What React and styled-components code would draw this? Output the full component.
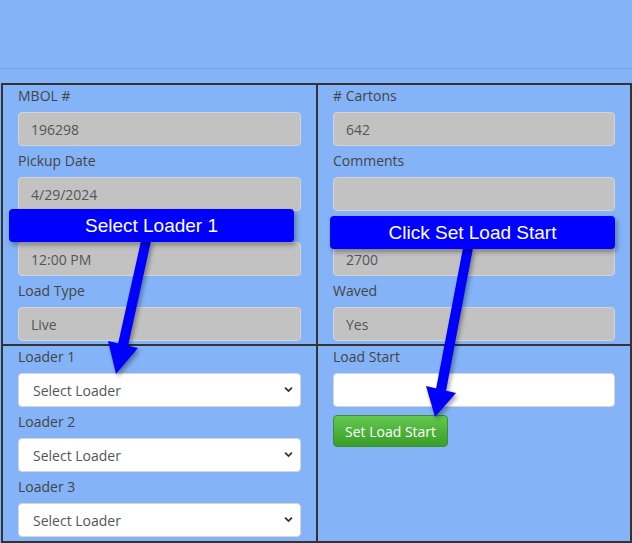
import React from "react";
import styled, { createGlobalStyle } from "styled-components";

const GlobalStyle = createGlobalStyle`
  html, body {
    margin: 0;
    padding: 0;
    background: #84b4f7;
    font-family: "Open Sans", "Noto Sans", Arial, sans-serif;
  }
  * { box-sizing: border-box; }
`;

const leftTop = [
  { label: "MBOL #", value: "196298" },
  { label: "Pickup Date", value: "4/29/2024" },
  { label: "Pickup Time", value: "12:00 PM" },
  { label: "Load Type", value: "Live" },
];

const rightTop = [
  { label: "# Cartons", value: "642" },
  { label: "Comments", value: "" },
  { label: "Weight", value: "2700" },
  { label: "Waved", value: "Yes" },
];

const loaders = ["Loader 1", "Loader 2", "Loader 3"];

export default function App() {
  return (
    <Page>
      <GlobalStyle />
      <Header />
      <Grid>
        <Cell>
          {leftTop.map((f) => (
            <Field key={f.label}>
              <Label>{f.label}</Label>
              <TextInput readOnly disabled value={f.value} />
            </Field>
          ))}
        </Cell>
        <Cell>
          {rightTop.map((f) => (
            <Field key={f.label}>
              <Label>{f.label}</Label>
              <TextInput readOnly disabled value={f.value} />
            </Field>
          ))}
        </Cell>
        <Cell bottom>
          {loaders.map((l) => (
            <Field key={l}>
              <Label>{l}</Label>
              <SelectWrap>
                <Select defaultValue="">
                  <option value="">Select Loader</option>
                </Select>
                <Chevron viewBox="0 0 10 7">
                  <path d="M1.2 1.4 L5 5.2 L8.8 1.4" />
                </Chevron>
              </SelectWrap>
            </Field>
          ))}
        </Cell>
        <Cell bottom>
          <Field>
            <Label>Load Start</Label>
            <TextInput white readOnly value="" />
          </Field>
          <GreenButton>Set Load Start</GreenButton>
        </Cell>
      </Grid>

      <Arrows viewBox="0 0 632 543">
        <g fill="#0000ff">
          <polygon points="141,241 151,241 128,346 118,344" />
          <polygon points="108,341 138,348 116,374" />
          <polygon points="463,248 473,248 446,391 436,389" />
          <polygon points="426,386 456,393 435,417" />
        </g>
      </Arrows>
      <Callout style={{ left: 9, top: 209 }}>Select Loader 1</Callout>
      <Callout style={{ left: 330, top: 216 }}>Click Set Load Start</Callout>
    </Page>
  );
}

const Page = styled.div`
  position: relative;
  width: 632px;
  height: 543px;
  overflow: hidden;
`;

const Header = styled.div`
  height: 69px;
  border-bottom: 1px solid #76a3e2;
  margin-bottom: 14px;
`;

const Grid = styled.div`
  margin-left: 1px;
  display: grid;
  grid-template-columns: 315px 314px;
  border-left: 2px solid #333;
  border-top: 2px solid #333;
`;

const Cell = styled.div`
  border-right: 2px solid #333;
  border-bottom: 2px solid #333;
  padding: 0 15px ${(p) => (p.bottom ? "4px" : "3px")} 15px;
  display: flex;
  flex-direction: column;
  gap: 4px;
`;

const Field = styled.div`
  display: flex;
  flex-direction: column;
`;

const Label = styled.label`
  font-size: 14px;
  line-height: 21px;
  color: #444;
  margin-bottom: 6px;
`;

const TextInput = styled.input`
  height: 34px;
  width: 100%;
  padding: 0 12px;
  border: 1px solid ${(p) => (p.white ? "#d6d6d6" : "#d4d4d4")};
  border-radius: 4px;
  background: ${(p) => (p.white ? "#fff" : "#c2c2c2")};
  color: #555;
  font-family: inherit;
  font-size: 14px;
  outline: none;
  &:disabled {
    opacity: 1;
    -webkit-text-fill-color: #555;
  }
`;

const SelectWrap = styled.div`
  position: relative;
`;

const Select = styled.select`
  appearance: none;
  -webkit-appearance: none;
  width: 100%;
  height: 34px;
  padding: 0 30px 0 14px;
  border: 1px solid #d6d6d6;
  border-radius: 4px;
  background: #fff;
  color: #555;
  font-family: inherit;
  font-size: 14px;
  outline: none;
`;

const Chevron = styled.svg`
  position: absolute;
  right: 8px;
  top: 13px;
  width: 9px;
  height: 7px;
  fill: none;
  stroke: #333;
  stroke-width: 2;
  pointer-events: none;
`;

const GreenButton = styled.button`
  align-self: flex-start;
  margin-top: 4px;
  height: 32px;
  padding: 0 11px;
  border: 1px solid #3a922a;
  border-radius: 4px;
  background: linear-gradient(#62c84f, #3b9e26);
  color: #fff;
  font-family: inherit;
  font-size: 14px;
  cursor: pointer;
`;

const Arrows = styled.svg`
  position: absolute;
  left: 0;
  top: 0;
  width: 632px;
  height: 543px;
  pointer-events: none;
  filter: drop-shadow(2px 3px 2px rgba(0, 0, 0, 0.35));
`;

const Callout = styled.div`
  position: absolute;
  width: 285px;
  height: 33px;
  border-radius: 4px;
  background: #0000ff;
  color: #fff;
  font-family: "Liberation Sans", Arial, sans-serif;
  font-size: 19px;
  line-height: 33px;
  text-align: center;
  box-shadow: 2px 3px 5px rgba(0, 0, 0, 0.35);
`;
